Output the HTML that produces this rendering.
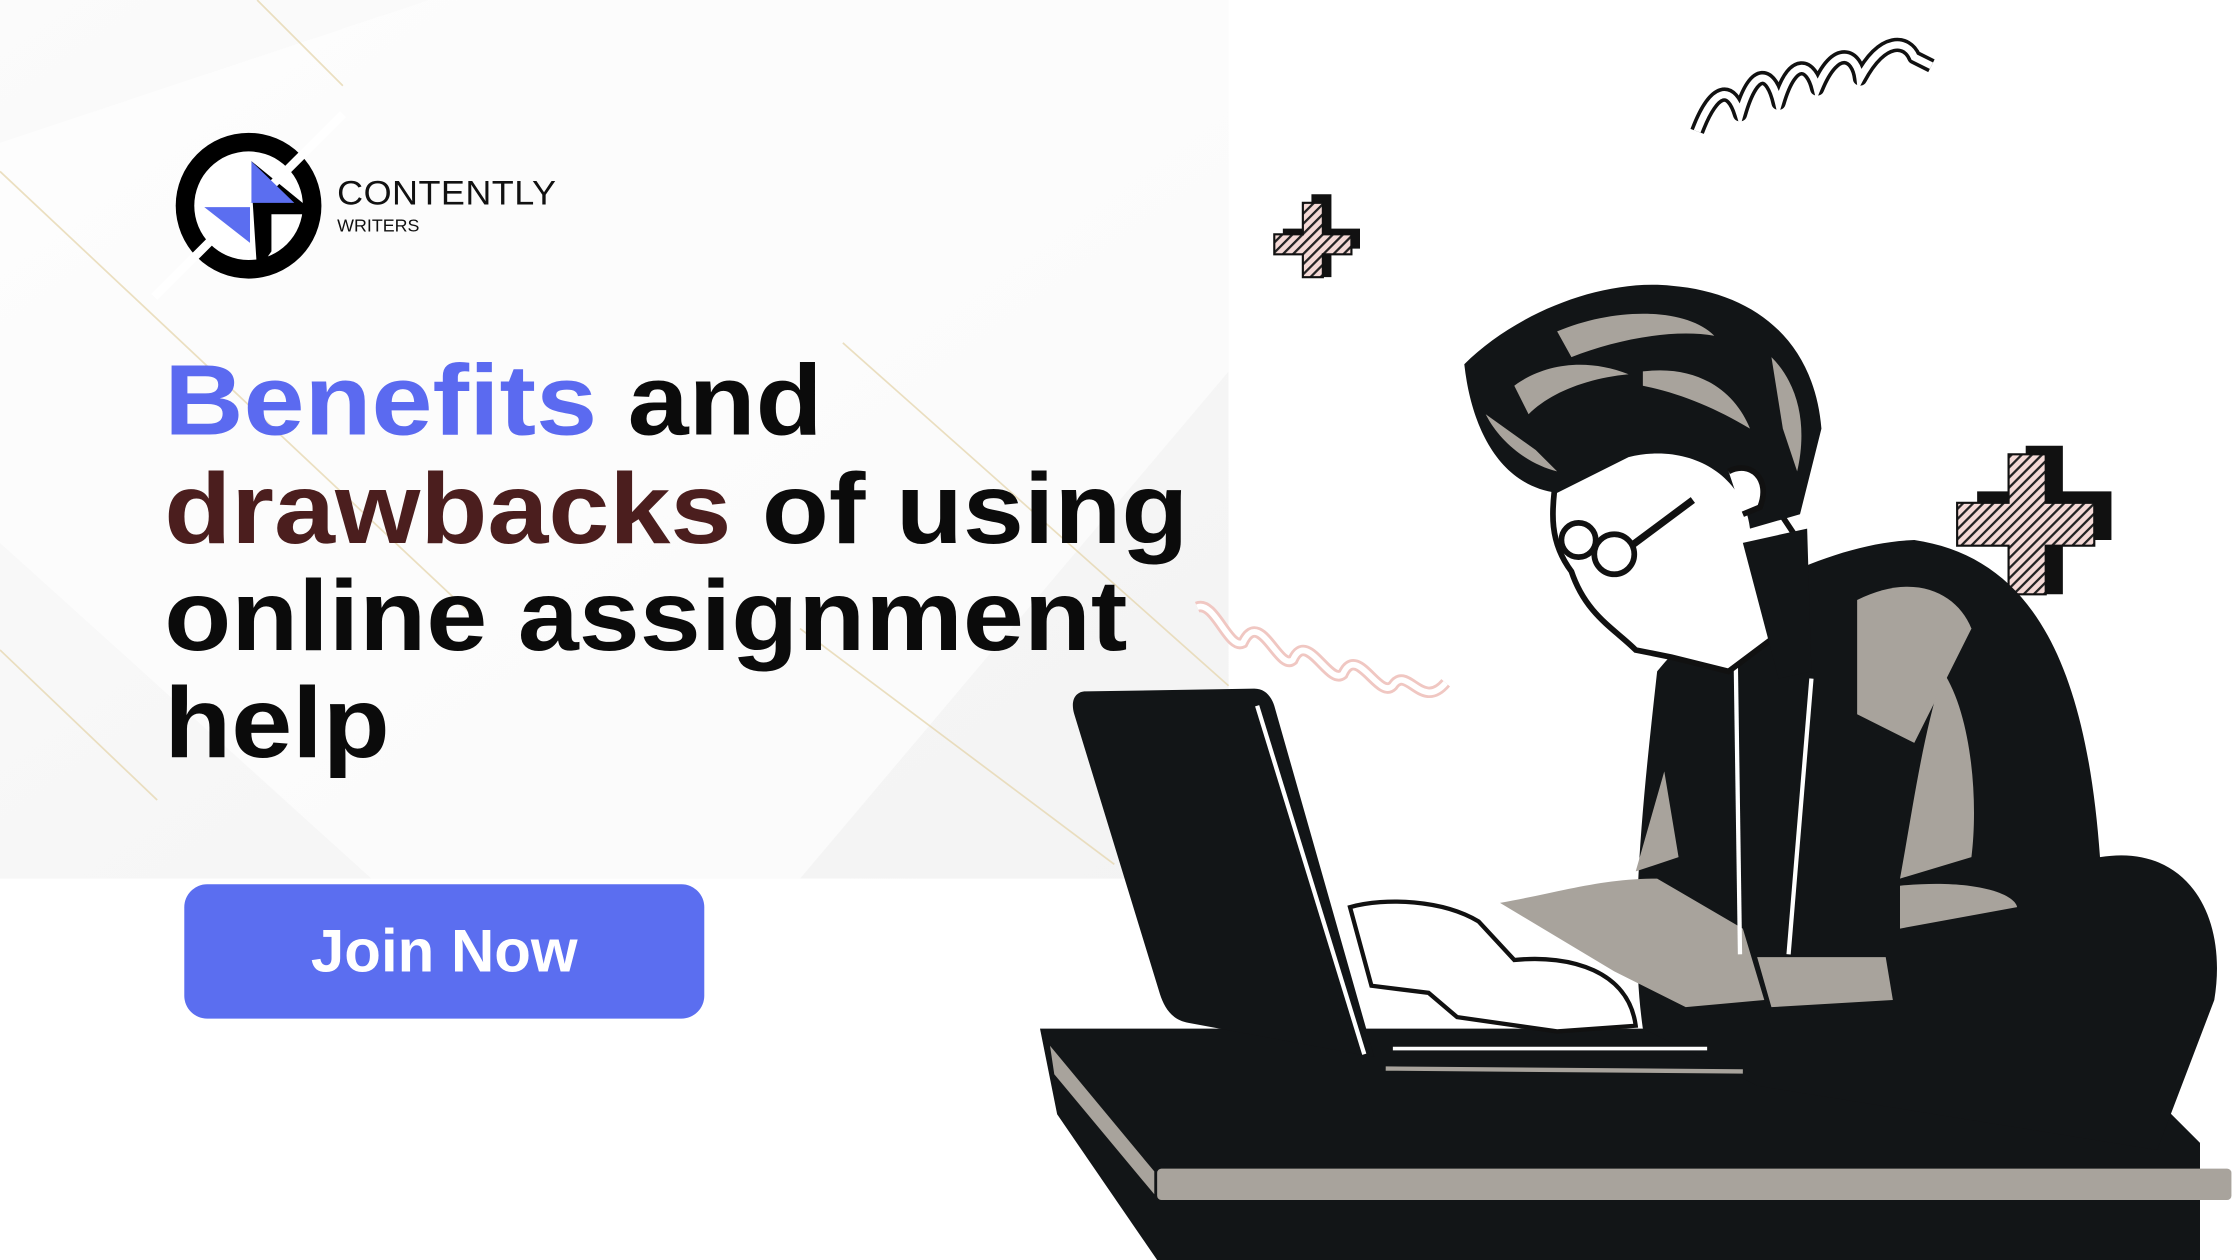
<!DOCTYPE html>
<html><head><meta charset="utf-8"><style>
html,body{margin:0;padding:0;width:2240px;height:1260px;overflow:hidden;background:#fff}
#w{position:absolute;left:0;top:0;width:1568px;height:882px;transform:scale(1.428571);transform-origin:0 0;font-family:"Liberation Sans",sans-serif}
.h{position:absolute;left:115px;font-weight:bold;font-size:70px;color:#0b0b0b;white-space:nowrap;line-height:1;transform:scaleX(1.097);transform-origin:0 0}
.btn{position:absolute;left:129px;top:619px;width:364px;height:94px;border-radius:16px;background:#5b6ef0;color:#fff;font-weight:bold;font-size:42px;text-align:center;line-height:94px}
</style></head><body><div id="w">
<svg width="1568" height="882" style="position:absolute;left:0;top:0">
<defs>
<linearGradient id="bg" x1="0" y1="0" x2="1" y2="1"><stop offset="0" stop-color="#fbfbfb"/><stop offset="1" stop-color="#f3f3f3"/></linearGradient>
<pattern id="ht" width="5" height="5" patternUnits="userSpaceOnUse" patternTransform="rotate(45)"><rect width="5" height="5" fill="#f4d9d6"/><rect width="1.6" height="5" fill="#222"/></pattern>
</defs>
<rect x="0" y="0" width="860" height="615" fill="url(#bg)"/>
<polygon points="300,0 860,0 860,260 560,615 260,615 0,380 0,100" fill="#fdfdfd" opacity=".7"/>
<g stroke="#e6d7b0" stroke-width="1.2" fill="none" opacity=".8">
<line x1="0" y1="120" x2="330" y2="430"/><line x1="0" y1="455" x2="110" y2="560"/><line x1="590" y1="240" x2="860" y2="480"/><line x1="560" y1="440" x2="780" y2="605"/><line x1="180" y1="0" x2="240" y2="60"/>
</g>
<!-- logo -->
<circle cx="174" cy="144" r="51" fill="#000"/>
<circle cx="174" cy="144" r="38" fill="#fff"/>
<polygon points="175,112 213,143 213,150 190,150 190,176 180,190" fill="#000"/>
<line x1="240" y1="80" x2="190" y2="130" stroke="#fff" stroke-width="6"/>
<line x1="108" y1="208" x2="158" y2="158" stroke="#fff" stroke-width="6"/>
<polygon points="175,112 206,142 175,142" fill="#5b6ef0"/>
<polygon points="143,145 175,145 175,170" fill="#5b6ef0"/>
<polyline points="175,112 175,142" stroke="#fff" stroke-width="2"/>
<text x="236" y="143" font-family="Liberation Sans" font-size="24" fill="#111" letter-spacing="0.3" transform="translate(236 0) scale(1.05 1) translate(-236 0)">CONTENTLY</text>
<text x="236" y="162" font-family="Liberation Sans" font-size="12.5" fill="#111">WRITERS</text>
<!-- squiggles -->
<path d="M1188,92 C1200,60 1212,60 1218,80 C1228,45 1240,50 1245,72 C1255,38 1268,45 1272,62 C1285,30 1300,38 1302,55 C1318,25 1335,28 1340,40 L1352,46" fill="none" stroke="#111" stroke-width="10" stroke-linejoin="round"/>
<path d="M1188,92 C1200,60 1212,60 1218,80 C1228,45 1240,50 1245,72 C1255,38 1268,45 1272,62 C1285,30 1300,38 1302,55 C1318,25 1335,28 1340,40 L1352,46" fill="none" stroke="#fff" stroke-width="5"/>
<path d="M838,425 C850,420 860,455 870,450 C882,425 895,470 905,462 C915,440 930,480 940,472 C950,450 965,490 975,480 C985,465 995,498 1012,478" fill="none" stroke="#f0c7c2" stroke-width="8"/>
<path d="M838,425 C850,420 860,455 870,450 C882,425 895,470 905,462 C915,440 930,480 940,472 C950,450 965,490 975,480 C985,465 995,498 1012,478" fill="none" stroke="#fff" stroke-width="4"/>
<!-- crosses -->
<path d="M918,136h14v24h20v14h-20v20h-14v-20h-20v-14h20z" fill="#111"/>
<path d="M912,142h14v22h20v14h-20v16h-14v-16h-20v-14h20z" fill="url(#ht)" stroke="#111" stroke-width="1.5"/>
<path d="M1418,312h26v32h34v34h-34v38h-26v-38h-34v-34h34z" fill="#111"/>
<path d="M1406,318h26v34h34v30h-34v34h-26v-34h-36v-30h36z" fill="url(#ht)" stroke="#111" stroke-width="1.5"/>
<!-- desk -->
<polygon points="728,720 1200,720 1500,760 1540,800 1540,882 810,882 740,780" fill="#121517"/>
<polygon points="735,732 808,820 808,836 738,752" fill="#a8a39c"/>
<rect x="810" y="818" width="752" height="22" rx="3" fill="#a8a39c"/>
<!-- body -->
<path d="M1160,470 C1200,420 1280,380 1340,378 C1420,390 1460,460 1470,600 C1530,590 1560,640 1550,700 L1510,805 L1230,760 L1150,720 C1140,650 1150,560 1160,470Z" fill="#121517"/>
<path d="M1300,420 C1340,400 1370,415 1380,440 L1340,520 L1300,500 Z" fill="#a8a39c"/>
<path d="M1360,470 C1380,500 1385,560 1380,600 L1330,615 C1340,560 1345,520 1360,470 Z" fill="#a8a39c"/>
<path d="M1145,610 L1165,540 L1175,600 Z" fill="#a8a39c"/>
<path d="M1050,632 C1090,625 1120,615 1160,615 L1220,650 L1235,700 L1180,705 L1130,680 Z" fill="#a8a39c"/>
<path d="M1230,670 L1320,670 L1325,700 L1240,705 Z" fill="#a8a39c"/>
<path d="M1330,620 C1380,615 1410,625 1412,635 L1330,650 Z" fill="#a8a39c"/>
<line x1="1215" y1="460" x2="1218" y2="668" stroke="#fff" stroke-width="3"/>
<line x1="1268" y1="475" x2="1252" y2="668" stroke="#fff" stroke-width="3"/>
<!-- hands -->
<path d="M945,635 C970,628 1010,630 1035,645 L1060,672 C1100,668 1140,680 1145,718 L1090,722 L1020,712 L1000,695 L960,690 Z" fill="#fff" stroke="#111" stroke-width="3"/>
<!-- head -->
<path d="M1090,330 C1110,300 1170,290 1220,320 L1260,380 L1250,440 L1210,470 L1170,460 L1145,455 C1130,440 1110,430 1100,400 C1085,380 1085,360 1090,330Z" fill="#fff" stroke="#111" stroke-width="4"/>
<path d="M1025,255 C1060,220 1120,195 1170,200 C1230,205 1270,240 1275,300 L1260,360 L1225,370 C1220,330 1180,310 1140,320 L1090,345 C1050,340 1030,300 1025,255Z" fill="#121517"/>
<g fill="#a8a39c">
<path d="M1090,232 C1130,215 1180,215 1200,235 C1170,230 1130,238 1100,250Z"/>
<path d="M1060,270 C1080,255 1110,250 1140,262 C1110,265 1085,275 1070,290Z"/>
<path d="M1040,290 C1050,310 1070,325 1090,330 L1075,315Z"/>
<path d="M1150,260 C1190,255 1215,275 1225,300 C1200,285 1175,275 1150,270Z"/>
<path d="M1240,250 C1260,270 1265,300 1258,330 L1248,300Z"/>
</g>
<circle cx="1105" cy="378" r="12" fill="none" stroke="#111" stroke-width="4"/><circle cx="1130" cy="388" r="14" fill="none" stroke="#111" stroke-width="4"/>
<line x1="1142" y1="382" x2="1185" y2="350" stroke="#111" stroke-width="5"/>
<path d="M1210,330 C1225,322 1240,335 1232,355 L1220,360" fill="#fff" stroke="#111" stroke-width="4"/>
<path d="M1220,380 L1265,370 L1268,470 L1245,475 Z" fill="#121517"/>
<!-- laptop -->
<path d="M760,484 L878,482 C886,482 890,488 892,494 L962,740 L832,716 C820,714 815,705 812,696 L752,500 C749,490 753,484 760,484Z" fill="#121517"/>
<path d="M880,494 L955,738" stroke="#fff" stroke-width="3"/>
<line x1="975" y1="734" x2="1195" y2="734" stroke="#fff" stroke-width="2.5"/>
<line x1="970" y1="748" x2="1220" y2="750" stroke="#a8a39c" stroke-width="3"/>
</svg>
<div class="h" style="top:245px"><span style="color:#5b6af0">Benefits</span> and</div>
<div class="h" style="top:321px"><span style="color:#4b1e1e">drawbacks</span> of using</div>
<div class="h" style="top:396px">online assignment</div>
<div class="h" style="top:471px">help</div>
<div class="btn">Join Now</div>
</div></body></html>
